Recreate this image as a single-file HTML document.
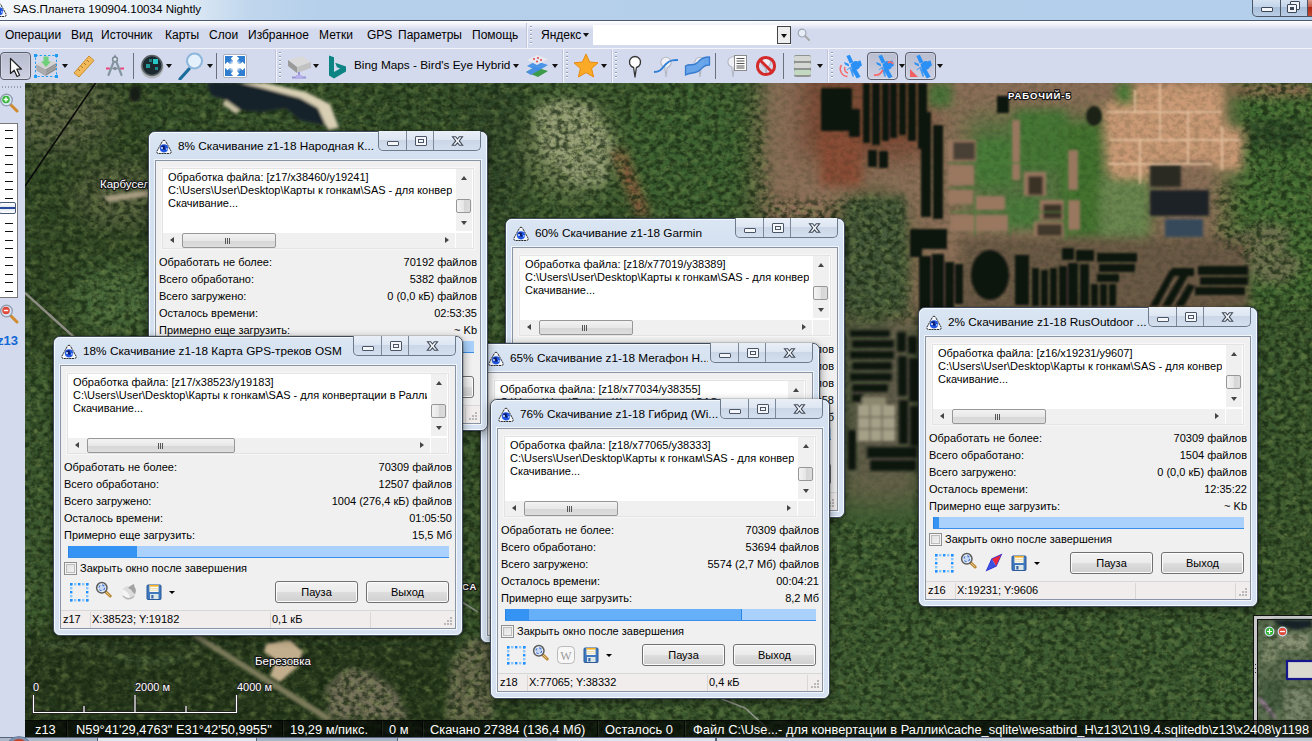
<!DOCTYPE html>
<html lang="ru"><head><meta charset="utf-8"><title>SAS.Планета 190904.10034 Nightly</title>
<style>
*{box-sizing:border-box}
html,body{margin:0;padding:0;width:1312px;height:741px;overflow:hidden;background:#2f4527;font-family:"Liberation Sans",sans-serif;font-size:11px;color:#000}
#map{position:absolute;left:25px;top:83px;width:1287px;height:654px;overflow:hidden;background:#31492a}
#map svg{display:block}
/* main chrome */
#tbar{position:absolute;left:0;top:0;width:1312px;height:21px;background:linear-gradient(90deg,#f3f7fb 0,#edf3f9 120px,#dce8f4 190px,#c0d6ed 250px,#b6d0eb 320px,#b4cfeb 100%);border-bottom:1px solid #4b5a70}
#tbar .tt{position:absolute;left:13px;top:1px;font-size:11.6px;line-height:15px;white-space:nowrap}
#mbar{position:absolute;left:0;top:21px;width:1312px;height:28px;background:linear-gradient(180deg,#fff 0,#eef0f9 4px,#d4daed 9px,#d4daed 100%);border-bottom:1px solid #f3f4fa}
#mbar span{position:absolute;top:7px;font-size:12px;line-height:15px;white-space:nowrap}
#tool{position:absolute;left:0;top:49px;width:1312px;height:34px;background:#d4daed}
#lpan{position:absolute;left:0;top:83px;width:25px;height:654px;background:#d4daed}
#stat{position:absolute;left:25px;top:720px;width:1287px;height:17px;background:rgba(4,8,4,.76);border-top:1px solid rgba(0,0,0,.6);color:#fff;font-size:12.85px;line-height:17px;white-space:nowrap;overflow:hidden}
#stat span{position:absolute;top:0}
#task{position:absolute;left:0;top:737px;width:1312px;height:4px;border-top:1px solid #56637a;background:linear-gradient(90deg,#aebacb 0,#aebacb 97px,#56637a 97px,#56637a 98px,#e4e8ef 98px,#e4e8ef 256px,#56637a 256px,#56637a 257px,#a9b7ca 257px,#a9b7ca 397px,#56637a 397px,#56637a 398px,#cdd4df 398px,#cdd4df 557px,#e0e4ec 557px,#e0e4ec 715px,#56637a 715px,#56637a 717px,#d4dae4 717px,#c4ccd8 100%)}
/* dialogs */
.win{position:absolute;height:300px;border-radius:7px;border:1px solid #3f4c5e;background:linear-gradient(180deg,#dbe6f3 0,#d3e0f0 28px,#d6e2f1 100%);box-shadow:0 0 0 1px rgba(0,0,0,.12),0 3px 10px rgba(0,0,0,.45)}
.wglow{position:absolute;left:0;top:0;right:0;bottom:0;border-radius:6px;border:1px solid rgba(255,255,255,.75)}
.ticon{position:absolute;left:7px;top:7px}
.ttext{position:absolute;left:29px;top:6px;font-size:11.8px;line-height:16px;white-space:nowrap;overflow:hidden}
.caps{position:absolute;right:6px;top:-1px;width:103px;height:20px;border:1px solid #6d7a8c;border-top:none;border-radius:0 0 5px 5px;background:linear-gradient(180deg,#e9eff7 0,#dde6f2 45%,#cbd7e7 50%,#d4dfee 100%);overflow:hidden}
.cb{position:absolute;top:0;height:19px;border-right:1px solid #7b8899}
.cmin{left:0;width:28px}.cmax{left:28px;width:27px}.ccls{left:55px;width:47px;border-right:none}
.cmin i{position:absolute;left:8px;top:10px;width:12px;height:5px;border:1px solid #4a5566;background:#f4f6fa;border-radius:1px}
.cmax i{position:absolute;left:8px;top:5px;width:12px;height:10px;border:1px solid #4a5566;background:#f4f6fa;border-radius:1px;box-shadow:inset 0 0 0 2px #f4f6fa,inset 0 0 0 3px #4a5566}
.ccls svg{position:absolute;left:17px;top:5px}
.client{position:absolute;left:6px;top:28px;right:6px;height:264px;background:#f0f0f0;border:1px solid #8893a3;box-shadow:0 0 0 1px rgba(255,255,255,.7)}
.memo{position:absolute;left:6px;top:7px;right:6px;height:81px;background:#fff;border:1px solid #e3e3e3;box-shadow:0 0 0 1px #f7f7f7}
.mtext{position:absolute;left:5px;top:2px;right:21px;height:42px;line-height:13px;white-space:nowrap;overflow:hidden}
.vsb{position:absolute;right:1px;top:0;width:16px;height:62px;background:#f0f0f0}
.hsb{position:absolute;left:0;bottom:0;right:18px;height:15px;background:#f0f0f0}
.sbc{position:absolute;right:1px;bottom:0;width:16px;height:15px;background:#f0f0f0}
.vth{position:absolute;left:0px;top:30px;width:15px;height:14px;border:1px solid #979797;border-radius:2px;background:linear-gradient(90deg,#f3f3f3,#e6e6e6 50%,#d5d5d5 51%,#dcdcdc)}
.hth{position:absolute;left:19px;top:0px;width:94px;height:15px;border:1px solid #979797;border-radius:2px;background:linear-gradient(180deg,#f3f3f3,#e8e8e8 50%,#d6d6d6 51%,#dedede)}
.hth span{position:absolute;left:42px;top:4px;width:1px;height:6px;background:#555;box-shadow:2px 0 0 #555,4px 0 0 #555}
.au,.ad,.al,.ar{position:absolute;width:0;height:0;border:3.5px solid transparent}
.au{left:4.5px;top:7px;border-top:none;border-bottom:4px solid #444}
.ad{left:4.5px;top:52px;border-bottom:none;border-top:4px solid #444}
.al{left:7px;top:4px;border-left:none;border-right:4px solid #444}
.ar{right:6px;top:4px;border-right:none;border-left:4px solid #444}
.row{position:absolute;left:3px;right:3px;height:14px;line-height:14px;white-space:nowrap}
.row .v{position:absolute;right:0;top:0}
.pbar{position:absolute;left:7px;right:6px;top:180px;height:12px;background:#a9d1fb;border-bottom:1px solid #3a8ee8;overflow:hidden}
.pm{position:absolute;left:0;top:0;height:11px;background:#66b0fa;border-right:1px solid #2a84e6}
.pd{position:absolute;left:0;top:0;height:11px;background:#3593f3;border-left:1px solid #2a84e6}
.chk{position:absolute;left:3px;top:196px;width:13px;height:13px;border:1px solid #8e8f8f;background:linear-gradient(135deg,#dcdcdc,#f6f6f6);box-shadow:inset 0 0 0 1px #f4f4f4,inset 0 0 0 2px #bcbcbc}
.chkl{position:absolute;left:19px;top:195px;line-height:14px;white-space:nowrap}
.ic1{position:absolute;left:8px;top:216px}
.ic2{position:absolute;left:34px;top:215px}
.ic3{position:absolute;left:58px;top:216px}
.ic4{position:absolute;left:85px;top:218px}
.dd{position:absolute;left:108px;top:225px;width:0;height:0;border:3px solid transparent;border-top:3px solid #000;border-bottom:none}
.btn{position:absolute;top:215px;width:83px;height:22px;border:1px solid #707070;border-radius:3px;background:linear-gradient(180deg,#f2f2f2 0,#ebebeb 48%,#dddddd 52%,#cfcfcf 100%);box-shadow:inset 0 0 0 1px #fcfcfc;text-align:center;line-height:20px}
.b1{right:97px}.b2{right:6px}
.sbar{position:absolute;left:0;right:0;bottom:0;height:18px;background:#f1eded;border-top:1px solid #d7d7d7;line-height:17px;white-space:nowrap}
.sbar span{position:absolute;top:0}
.s1{left:2px}.s2{left:31px}.s3{left:211px}
.sbar i{position:absolute;top:1px;width:1px;height:16px;background:#d7d7d7}
.d1{left:29px}.d2{left:209px}.d3{left:309px}
.grip{position:absolute;right:1px;bottom:1px;width:10px;height:10px;background:
 radial-gradient(circle at 1px 1px,#b8b8b8 1px,transparent 1.2px) 6px 6px/3px 3px no-repeat,
 radial-gradient(circle at 1px 1px,#b8b8b8 1px,transparent 1.2px) 3px 6px/3px 3px no-repeat,
 radial-gradient(circle at 1px 1px,#b8b8b8 1px,transparent 1.2px) 6px 3px/3px 3px no-repeat,
 radial-gradient(circle at 1px 1px,#b8b8b8 1px,transparent 1.2px) 0px 6px/3px 3px no-repeat,
 radial-gradient(circle at 1px 1px,#b8b8b8 1px,transparent 1.2px) 6px 0px/3px 3px no-repeat,
 radial-gradient(circle at 1px 1px,#b8b8b8 1px,transparent 1.2px) 3px 3px/3px 3px no-repeat}
#mcaps{position:absolute;left:1252px;top:-1px;width:70px;height:18px;border:1px solid #4a5566;border-top:none;border-radius:0 0 0 5px;overflow:hidden;background:linear-gradient(180deg,#d6e3f2 0,#c4d5ea 45%,#a9bed8 50%,#b9cde6 100%)}
#mcaps div{position:absolute;top:0;height:17px}
.m1{left:0;width:28px;border-right:1px solid #4a5566}
.m1 i{position:absolute;left:8px;top:8px;width:12px;height:5px;border:1px solid #3d4656;background:#f4f6fa;border-radius:1px}
.m2{left:28px;width:27px;border-right:1px solid #4a5566}
.m2 i{position:absolute;left:9px;top:2px;width:10px;height:9px;border:1px solid #3d4656;background:#f0f3f8;border-radius:1px}
.m2 b{position:absolute;left:6px;top:5px;width:10px;height:9px;border:1px solid #3d4656;background:#f0f3f8;border-radius:1px;box-shadow:inset 0 0 0 2px #f0f3f8,inset 0 0 0 4px #3d4656}
.m3{left:55px;width:20px;background:linear-gradient(180deg,#e0a090 0,#c85a48 45%,#b02a18 50%,#c04a30 100%)}
.tsep{position:absolute;top:4px;width:1px;height:26px;background:#6c6f7c}
.tend{position:absolute;top:0;width:2px;height:34px;background:linear-gradient(90deg,#c2c6dc 50%,#f4f5fb 50%)}
.tgrip{position:absolute;top:3px;width:2px;height:28px;background:repeating-linear-gradient(180deg,#9a9fb6 0,#9a9fb6 1px,#fff 1px,#fff 2px,transparent 2px,transparent 4px)}
.tdd{position:absolute;width:0;height:0;border:3.5px solid transparent;border-top:4px solid #111;border-bottom:none}
.tsel{position:absolute;top:3px;height:28px;border:1px solid #5a5d6c;border-radius:4px;background:linear-gradient(180deg,#b9bdd0 0,#c2c6d8 50%,#cdd1e2 100%);box-shadow:inset 0 0 0 1px rgba(255,255,255,.25)}
.tlbl{position:absolute;top:8px;font-size:11.8px;line-height:16px;white-space:nowrap}
#srch{position:absolute;left:593px;top:4px;width:198px;height:20px;background:#fff}
.sdd{position:absolute;right:0;top:1px;width:14px;height:18px;border:1px solid #444;background:#eee}
.lgrip{position:absolute;left:2px;top:3px;width:21px;height:2px;background:repeating-linear-gradient(90deg,#9a9eb4 0,#9a9eb4 1px,transparent 1px,transparent 3px)}
#zsl{position:absolute;left:0;top:40px;width:18px;height:175px;border:1px solid #777;border-left:none;background:#fff repeating-linear-gradient(180deg,transparent 0,transparent 6px,#111 6px,#111 7px,transparent 7px,transparent 8.45px);background-size:8px 100%;background-repeat:no-repeat;background-position:5px 0px}
#zth{position:absolute;left:-1px;top:78px;width:17px;height:12px;border:1px solid #4a5a7a;border-radius:2px;background:linear-gradient(180deg,#fff 0,#e4e8f0 40%,#284a9a 45%,#284a9a 55%,#e4e8f0 60%,#fff 100%)}
#zlv{position:absolute;left:-3px;top:250px;font-size:13px;font-weight:bold;color:#1268d6}
#orb{position:absolute;left:5px;top:-2px;width:28px;height:28px;border-radius:50%;background:radial-gradient(circle at 50% 45%,#e0482a 0,#c8381c 45%,#7f98b8 55%,#5f7ea8 70%,#9fb4cf 100%);border:1px solid #6a7f9c}
#stat i{position:absolute;top:0;width:1px;height:17px;background:rgba(0,0,0,.75);box-shadow:1px 0 0 rgba(255,255,255,.08)}

</style></head><body>
<svg width="0" height="0" style="position:absolute"><defs>
<g id="sasicon"><path d="M8 1.2 Q9 1.200 9.600 2.300 L15 12 Q15.800 14.300 13.500 14.500 L2.500 14.500 Q0.200 14.300 1 12 L6.400 2.300 Q7 1.200 8 1.200 Z" fill="#f4f7fc" stroke="#2a2a2a" stroke-width="1" stroke-dasharray="2.2 0.6"/><circle cx="8" cy="9.300" r="4.100" fill="#1f55e0"/><path d="M5 8 q2 -3 4 -1 q-1 2 1 3 q-3 2 -5 -2z" fill="#0a1a6a"/><circle cx="6" cy="9" r="1.100" fill="#cfe0ff"/><circle cx="10.800" cy="10" r="0.900" fill="#9cc2ff"/></g>
<g id="selrect"><rect x="1" y="1" width="2.400" height="2.400" fill="#1e90ff"/><rect x="1" y="17" width="2.400" height="2.400" fill="#1e90ff"/><rect x="1" y="1" width="2.400" height="2.400" fill="#1e90ff"/><rect x="17" y="1" width="2.400" height="2.400" fill="#1e90ff"/><rect x="5" y="1" width="2.400" height="2.400" fill="#86c8ff"/><rect x="5" y="17" width="2.400" height="2.400" fill="#86c8ff"/><rect x="1" y="5" width="2.400" height="2.400" fill="#86c8ff"/><rect x="17" y="5" width="2.400" height="2.400" fill="#86c8ff"/><rect x="9" y="1" width="2.400" height="2.400" fill="#1e90ff"/><rect x="9" y="17" width="2.400" height="2.400" fill="#1e90ff"/><rect x="1" y="9" width="2.400" height="2.400" fill="#1e90ff"/><rect x="17" y="9" width="2.400" height="2.400" fill="#1e90ff"/><rect x="13" y="1" width="2.400" height="2.400" fill="#86c8ff"/><rect x="13" y="17" width="2.400" height="2.400" fill="#86c8ff"/><rect x="1" y="13" width="2.400" height="2.400" fill="#86c8ff"/><rect x="17" y="13" width="2.400" height="2.400" fill="#86c8ff"/><rect x="17" y="1" width="2.400" height="2.400" fill="#1e90ff"/><rect x="17" y="17" width="2.400" height="2.400" fill="#1e90ff"/><rect x="1" y="17" width="2.400" height="2.400" fill="#1e90ff"/><rect x="17" y="17" width="2.400" height="2.400" fill="#1e90ff"/></g>
<g id="magn"><path d="M10.800 10.800 L15.200 15" stroke="#b8842e" stroke-width="3" stroke-linecap="round"/><path d="M11.300 11.300 L14.800 14.600" stroke="#e8c890" stroke-width="1" stroke-linecap="round"/><circle cx="6.800" cy="6.800" r="5.200" fill="#e4ecf8" stroke="#5c5c5c" stroke-width="1.500"/><circle cx="6.800" cy="6.800" r="2.900" fill="#c8d8f0" stroke="#3a6fd0" stroke-width="1.100" stroke-dasharray="2.6 1.95"/></g>
<g id="ico_w"><rect x="1.5" y="1.5" width="17" height="17" rx="4" fill="#f7f7f7" stroke="#b9b9b9"/><text x="10" y="14.5" font-family="Liberation Serif,serif" font-size="12" text-anchor="middle" fill="#9a9a9a">W</text></g>
<g id="ico_globe"><circle cx="9.500" cy="11" r="7" fill="#dcdcdc"/><path d="M3.500 7.500 Q9 9 11 15 Q8 18.500 4.500 16 Q2 12 3.500 7.500Z" fill="#f4f4f4"/><path d="M9 6 Q12 3 15 2 L15.500 5 Q18 8 16 12 Q13 10 12 7.500 Z" fill="#a2a2a2"/><path d="M4 14 Q9 19 15 14.500" fill="none" stroke="#b4b4b4" stroke-width="1.200"/></g>
<g id="ico_comp"><path d="M3 17 L8 6 L17 2 L12 13 Z" fill="#fff" stroke="#2a2ad0" stroke-width="1.4"/><path d="M17 2 L12 13 L8 6 Z" fill="#e8283c"/><path d="M3 17 L8 6 L12 13 Z" fill="#3a52e0"/></g>
<g id="floppy"><rect x="1" y="1" width="14" height="14.500" rx="1" fill="#3f78be" stroke="#2a5a9a" stroke-width="1"/><rect x="3.500" y="1" width="9" height="7" fill="#fbfbf4"/><rect x="3.500" y="1" width="9" height="1.600" fill="#f5b020"/><path d="M3.500 4.500 h9 M3.500 6.300 h9" stroke="#e8d8a0" stroke-width=".8"/><rect x="4" y="10" width="8.500" height="5" fill="#dce8e8"/><rect x="5.300" y="11" width="2.200" height="3.500" fill="#3a68a8"/></g>
<g id="sat"><g fill="#2b90f5"><path d="M8.400 2 L11.800 0.800 L15.400 8 L11.800 9.600 Z"/><path d="M13.400 15.400 L17.400 13.800 L22.600 22.800 L18.800 24.400 Z"/><circle cx="17.800" cy="11.400" r="4.300"/><path d="M12.500 10 L14.500 9 L16 15 L14 16 Z"/><path d="M20 7 L22.500 6.500 L24 11.500 L21.500 13 Z"/><path d="M6 8 L10.600 9.800 L11.200 12.600 L7 10.400 Z"/><path d="M11.500 13 L14.500 16 L16 22.500 L14.500 22.800 L12.500 17 Z" opacity=".85"/><path d="M8.500 15.500 L13 12.500 L13.600 13.500 L9 16.300Z" opacity=".7"/></g></g>
</defs></svg>

<div id="map"><svg width="1287" height="655" viewBox="25 83 1287 655">
<defs>
<filter id="b12" x="-20%" y="-20%" width="140%" height="140%"><feGaussianBlur stdDeviation="12"/></filter>
<filter id="b6" x="-20%" y="-20%" width="140%" height="140%"><feGaussianBlur stdDeviation="5"/></filter>
<filter id="b3" x="-20%" y="-20%" width="140%" height="140%"><feGaussianBlur stdDeviation="3"/></filter>
<filter id="b2" x="-10%" y="-10%" width="120%" height="120%"><feGaussianBlur stdDeviation="1.6"/></filter>
<filter id="b1" x="-10%" y="-10%" width="120%" height="120%"><feGaussianBlur stdDeviation="0.8"/></filter>
<filter id="nz" color-interpolation-filters="sRGB" x="0" y="0" width="100%" height="100%"><feTurbulence type="fractalNoise" baseFrequency="0.16 0.2" numOctaves="3" seed="7" result="n"/><feColorMatrix in="n" type="matrix" values="0 0 0 0 0.08  0 0 0 0 0.14  0 0 0 0 0.06  2.2 2.2 0 0 -1.85"/></filter>
<filter id="nz2" color-interpolation-filters="sRGB" x="0" y="0" width="100%" height="100%"><feTurbulence type="fractalNoise" baseFrequency="0.12 0.15" numOctaves="3" seed="23" result="n"/><feColorMatrix in="n" type="matrix" values="0 0 0 0 0.49  0 0 0 0 0.57  0 0 0 0 0.31  0 1.8 1.2 0 -1.30"/></filter>
<mask id="mk" maskUnits="userSpaceOnUse" x="25" y="83" width="1287" height="655"><rect x="25" y="83" width="1287" height="655" fill="#fff"/><g filter="url(#b6)"><path d="M760 70 L1240 70 L1245 180 L1215 185 L1215 240 L1250 262 L1250 312 L912 318 L905 200 L860 195 L830 200 L770 200 Z" fill="#3a3a3a"/><rect x="843" y="322" width="78" height="200" fill="#333"/></g></mask>
</defs>
<rect x="25" y="83" width="1287" height="655" fill="#3d5a30"/>
<!-- broad soft regions -->
<g filter="url(#b12)">
<rect x="0" y="60" width="160" height="300" fill="#304828"/>
<ellipse cx="60" cy="110" rx="50" ry="40" fill="#5f6646"/>
<ellipse cx="120" cy="195" rx="45" ry="28" fill="#58603f"/>
<ellipse cx="120" cy="300" rx="50" ry="35" fill="#4a6a3a"/>
<rect x="140" y="60" width="380" height="80" fill="#34502b"/>
<ellipse cx="570" cy="148" rx="42" ry="46" fill="#7a865c"/><rect x="470" y="83" width="55" height="140" fill="#33482b"/>
<ellipse cx="690" cy="150" rx="70" ry="70" fill="#3d6232"/>
<rect x="760" y="60" width="500" height="260" fill="#8c6e58"/>
<rect x="800" y="60" width="130" height="100" fill="#7a4a36"/>
<ellipse cx="870" cy="260" rx="40" ry="70" fill="#40582f"/>
<rect x="1225" y="70" width="110" height="270" fill="#426c32"/>
<rect x="1060" y="115" width="90" height="125" fill="#4a7038"/>
<rect x="965" y="115" width="100" height="110" fill="#55713f"/>
<rect x="843" y="322" width="78" height="150" fill="#5e5a48"/>
<rect x="840" y="470" width="82" height="60" fill="#66624a"/>
<rect x="820" y="500" width="500" height="260" fill="#3c5c30"/>
<rect x="1255" y="300" width="80" height="330" fill="#3a582f"/>
<rect x="0" y="630" width="520" height="120" fill="#25391f"/>
<rect x="460" y="430" width="40" height="300" fill="#3a582f"/>
</g>
<!-- medium detail -->
<g filter="url(#b6)">
<path d="M1103 108 L1134 83 L1224 83 L1224 126 L1243 128 L1243 171 L1215 170 L1212 161 L1153 164 L1150 185 L1128 185 L1107 173 Z" fill="#cc9a76"/>
<rect x="1228" y="83" width="84" height="14" fill="#8a6a50"/>
<rect x="1246" y="120" width="60" height="28" fill="#2a4a27"/>
<path d="M1221 240 L1260 222 L1292 228 L1285 250 L1305 262 L1290 282 L1259 284 L1250 266 L1225 262 Z" fill="#6d7050"/>
<rect x="975" y="139" width="38" height="46" fill="#477a38"/>
<rect x="1015" y="110" width="52" height="60" fill="#457635"/>
<rect x="1006" y="198" width="32" height="30" fill="#4a7a3a"/>
<rect x="1062" y="125" width="38" height="110" fill="#42722f"/>
<rect x="1100" y="178" width="48" height="58" fill="#6a8650"/>
<rect x="928" y="83" width="24" height="24" fill="#4a7238"/>
<rect x="1116" y="83" width="18" height="22" fill="#4a7a38"/>
<rect x="820" y="132" width="42" height="54" fill="#8a4c36"/>
<path d="M845 201 L905 195 L908 313 L840 313 Z" fill="#475a3a"/>
<rect x="960" y="238" width="290" height="72" fill="#6a5844"/>
<path d="M534 108 L560 100 L592 104 L612 140 L604 186 L575 182 L548 160 L536 132 Z" fill="#98a078"/>
<path d="M610 150 L625 150 L650 215 L638 218 Z" fill="#8a5a3c"/>
</g>
<g filter="url(#b3)">
<path d="M325 690 L345 668 L372 672 L395 690 L409 720 L330 720 Z" fill="#75705a"/>
<path d="M446 720 L452 660 L470 638 L493 640 L493 720 Z" fill="#6a6a50"/>
<path d="M40 646 Q90 640 120 656 T200 650" stroke="#4a5f3a" stroke-width="5" fill="none"/>
</g>
<!-- texture -->
<g mask="url(#mk)"><rect x="25" y="83" width="1287" height="655" filter="url(#nz2)" opacity=".5"/>
<rect x="25" y="83" width="1287" height="655" filter="url(#nz)" opacity=".7"/></g>
<g filter="url(#b2)">
<path d="M191 636 L198 634 L333 718 L326 721 Z" fill="#7d7c5c"/>
<path d="M266 644 L290 640 L303 652 L296 668 L280 682 L270 676 L276 660 L264 652 Z" fill="#c2ae8c"/>
</g>
<!-- sharp dark fields -->
<g filter="url(#b1)" fill="#0d120c">
<rect x="821" y="88" width="31" height="43"/><rect x="849" y="109" width="11" height="28"/>
<rect x="863" y="83" width="7" height="60"/><rect x="872" y="83" width="8" height="62"/><rect x="882" y="83" width="7" height="58"/><rect x="890" y="83" width="7" height="55"/>
<rect x="899" y="83" width="7" height="52"/><rect x="908" y="83" width="8" height="58"/><rect x="918" y="83" width="9" height="66"/>
<rect x="868" y="150" width="9" height="17"/><rect x="879" y="151" width="9" height="17"/>
<rect x="921" y="112" width="10" height="105"/><rect x="933" y="125" width="10" height="94"/>
<rect x="910" y="229" width="12" height="28"/><rect x="922" y="229" width="25" height="20"/>
<rect x="919" y="256" width="12" height="57"/><rect x="932" y="254" width="12" height="59"/><rect x="945" y="262" width="9" height="51"/><rect x="955" y="264" width="8" height="40"/>
<ellipse cx="990" cy="275" rx="19" ry="25"/>
<rect x="1015" y="255" width="14" height="50"/><rect x="1032" y="268" width="7" height="38"/><rect x="1041" y="270" width="7" height="36"/><rect x="1050" y="268" width="7" height="38"/><rect x="1059" y="266" width="8" height="40"/>
<rect x="1062" y="248" width="12" height="12"/><rect x="1076" y="250" width="18" height="11"/><rect x="1068" y="263" width="10" height="43"/><rect x="1080" y="264" width="9" height="42"/>
<rect x="1097" y="253" width="40" height="9"/><rect x="1099" y="264" width="36" height="8"/><rect x="1097" y="274" width="22" height="8"/>
<rect x="1091" y="284" width="7" height="22"/><rect x="1100" y="284" width="7" height="22"/><rect x="1109" y="284" width="7" height="22"/>
<path d="M1150 306 L1170 270 L1177 270 L1158 306 Z M1162 306 L1182 272 L1189 274 L1171 306 Z M1175 306 L1188 284 L1195 286 L1184 306Z"/>
<rect x="1172" y="268" width="22" height="8"/>
<rect x="1198" y="266" width="50" height="9"/><rect x="1200" y="277" width="48" height="8"/><rect x="1195" y="287" width="50" height="8"/>
<rect x="997" y="96" width="12" height="17"/>
<ellipse cx="1094" cy="116" rx="8" ry="10" fill="#1c2416"/>
</g>
<g filter="url(#b2)">
<path d="M206 83 L262 83 L300 96 L318 106 L326 126 L300 120 L285 108 L262 112 L240 110 L226 100 L212 96 Z" fill="#16242a"/>
<path d="M240 83 L266 83 L306 92 L330 104 L339 128 L328 130 L318 108 L300 98 L262 88 Z" fill="#d8cfb4"/>
<path d="M226 100 L240 110 L236 114 L222 104Z" fill="#c8c0a4"/>
<ellipse cx="135" cy="94" rx="6" ry="8" fill="#141c12"/>
<path d="M104 196 L150 190 L152 196 L108 202 Z" fill="#a89c82"/>
<rect x="1150" y="165" width="31" height="22" fill="#2b2b22"/>
<rect x="1150" y="190" width="59" height="26" fill="#1c2226"/>
<rect x="1165" y="219" width="38" height="18" fill="#34485a"/>
<g fill="#9a7860"><rect x="948" y="140" width="28" height="22"/><rect x="948" y="165" width="26" height="20"/><rect x="948" y="190" width="25" height="14"/><rect x="975" y="196" width="30" height="14"/><rect x="950" y="215" width="58" height="16"/><rect x="1024" y="172" width="22" height="24"/><rect x="1040" y="200" width="24" height="20"/><rect x="1034" y="222" width="30" height="15"/><rect x="1012" y="120" width="8" height="60"/><rect x="1068" y="150" width="10" height="40"/><rect x="1068" y="200" width="12" height="30"/></g>
<rect x="953" y="142" width="22" height="18" fill="#4a4034"/><rect x="1028" y="176" width="15" height="19" fill="#3a3228"/><rect x="1043" y="204" width="19" height="15" fill="#3a3228"/><rect x="1037" y="224" width="25" height="12" fill="#3f382c"/>
<g fill="#10140e"><rect x="850" y="330" width="40" height="7"/><rect x="852" y="340" width="42" height="8"/><rect x="850" y="351" width="44" height="8"/><rect x="852" y="362" width="40" height="8"/><rect x="850" y="373" width="42" height="8"/><rect x="852" y="384" width="36" height="8"/><rect x="852" y="394" width="12" height="8"/>
<rect x="897" y="332" width="9" height="20"/><rect x="908" y="336" width="9" height="18"/><rect x="898" y="356" width="9" height="40"/><rect x="909" y="358" width="10" height="44"/><rect x="899" y="400" width="9" height="44"/><rect x="910" y="406" width="9" height="40"/>
<rect x="867" y="447" width="50" height="11"/><rect x="870" y="460" width="46" height="11"/><rect x="848" y="430" width="8" height="40"/></g>
<rect x="858" y="405" width="37" height="36" fill="#a6a088"/><rect x="862" y="397" width="24" height="8" fill="#8c8870"/><path d="M858 417 h37 M858 429 h37 M870 405 v36 M882 405 v36" stroke="#6a6654" stroke-width="1.5"/>
</g>
<g filter="url(#b1)" stroke="#e6c4a2" stroke-width="2" fill="none" opacity=".85">
<path d="M1107 112 H1222 M1110 140 H1240 M1108 164 H1212 M1160 84 V140 M1135 90 V112 M1188 112 V164 M1222 126 V170 M1140 140 V184"/>
</g>
<g filter="url(#b1)" stroke="#4c7a3a" stroke-width="1.5" fill="none" opacity=".8"><path d="M948 163 H1066 M948 188 H1010 M1010 120 V236 M975 196 V236 M950 212 H1066 M1066 120 V240"/></g>
<!-- lines -->
<path d="M95.5 83 L25 186" stroke="#0a0a0a" stroke-width="1.6" fill="none"/>
<path d="M25 293 L75 338" stroke="#8d8d84" stroke-width="2.4" fill="none"/>
<path d="M462 602 L478 612" stroke="#9a9a94" stroke-width="1.5" fill="none" opacity=".8"/>
<path d="M722 699 L745 708 L778 738" stroke="#a4a4a0" stroke-width="1.6" fill="none" opacity=".8"/>
<g font-family="Liberation Sans, sans-serif" fill="#fff" stroke="#1a1a1a" stroke-width="2.4" paint-order="stroke" stroke-linejoin="round">
<text x="100" y="187.500" font-size="11.5">Карбусель</text>
<text x="255" y="665" font-size="11.500">Березовка</text>
<text x="1008" y="98.500" font-size="9.5" font-weight="bold" letter-spacing="0.9">РАБОЧИЙ-5</text>
<text x="462" y="589.500" font-size="9.5" font-weight="bold" letter-spacing="0.9">СА</text>
</g>
<g font-family="Liberation Sans, sans-serif" font-size="11" fill="#fff" stroke="#222" stroke-width="1.8" paint-order="stroke">
<text x="33" y="691">0</text><text x="135" y="691">2000 м</text><text x="237" y="691">4000 м</text></g>
<path d="M33.500 695 V712.500 H236.500 V695 M135 695 V712 M84 706 V712 M186 706 V712" fill="none" stroke="#222" stroke-width="3"/>
<path d="M33.500 695 V712.500 H236.500 V695 M135 695 V712 M84 706 V712 M186 706 V712" fill="none" stroke="#fff" stroke-width="1.2"/>
<g>
<rect x="1253.500" y="615.500" width="70" height="120" fill="#c9c9c9" stroke="#111" stroke-width="1"/>
<rect x="1257.500" y="619.500" width="70" height="120" fill="#5d6f50" stroke="#111" stroke-width="1"/>
<g filter="url(#b2)"><path d="M1272 620 H1312 V627 L1296 630 L1280 626 Z" fill="#14202c"/><rect x="1262" y="640" width="14" height="24" fill="#7f8a6a"/><rect x="1278" y="634" width="30" height="16" fill="#8a9274"/><rect x="1262" y="680" width="20" height="30" fill="#4a5f42"/><rect x="1285" y="690" width="27" height="30" fill="#7a866a"/><path d="M1259 698 L1275 718" stroke="#a080a0" stroke-width="3"/></g>
<rect x="1258" y="620" width="54" height="100" filter="url(#nz)" opacity=".4"/>
<rect x="1287" y="661" width="30" height="18" fill="#d9d9cf" stroke="#15158c" stroke-width="2.2"/>
<circle cx="1269.500" cy="631.500" r="4.300" fill="#35b535" stroke="#cfe4f4" stroke-width="1.2"/><path d="M1267 631.500 h5 M1269.500 629 v5" stroke="#fff" stroke-width="1.2"/>
<circle cx="1282.500" cy="631.500" r="4.300" fill="#e04a3a" stroke="#cfe4f4" stroke-width="1.2"/><path d="M1280 631.500 h5" stroke="#fff" stroke-width="1.300"/>
<path d="M1255.500 664 v1 m0 3 v1 m0 3 v1" stroke="#333" stroke-width="1"/>
</g>
</svg>
</div>
<div id="tbar"><svg style="position:absolute;left:-9px;top:2px" width="16" height="16" viewBox="0 0 16 16"><use href="#sasicon"/></svg><div class="tt">SAS.Планета 190904.10034 Nightly</div>
<div id="mcaps"><div class="m1"><i></i></div><div class="m2"><i></i><b></b></div><div class="m3"></div></div></div>
<div id="mbar"><span style="left:5px">Операции</span><span style="left:71px">Вид</span><span style="left:101px">Источник</span><span style="left:165px">Карты</span><span style="left:209px">Слои</span><span style="left:248px">Избранное</span><span style="left:319px">Метки</span><span style="left:367px">GPS</span><span style="left:398px">Параметры</span><span style="left:472px">Помощь</span><i class="tend" style="left:526px;top:2px;height:25px"></i><i class="tgrip" style="left:530px;top:5px;height:20px"></i><span style="left:541px">Яндекс</span><b class="tdd" style="left:583px;top:12px"></b>
<div id="srch"><div class="sdd"><b class="tdd" style="left:3px;top:7px"></b></div></div>
<svg style="position:absolute;left:797px;top:7px" width="14" height="14" viewBox="0 0 18 18"><circle cx="6.5" cy="6.5" r="5" fill="#e6edf6" stroke="#9aa4b0" stroke-width="1.4"/><path d="M10.4 10.4 L15.5 15.5" stroke="#a9a9a9" stroke-width="2.6" stroke-linecap="round"/></svg>
</div>
<div id="tool">
<div class="tsel" style="left:0;width:31px"></div>
<svg style="position:absolute;left:9px;top:8px" width="14" height="21" viewBox="0 0 14 21"><path d="M1.5 1.5 L1.5 16.5 L5.2 13.2 L8 19.5 L10.6 18.3 L7.8 12.2 L12.5 12.2 Z" fill="#fff" stroke="#222" stroke-width="1.2" stroke-linejoin="round"/></svg>
<svg style="position:absolute;left:33px;top:4px" width="26" height="26" viewBox="0 0 26 26"><path d="M3 11.500 L13 6.500 L23.500 10 L12.500 16.500 Z" fill="#d2d2d2"/><path d="M3 11.500 L12.500 16.500 L12.500 23 L3.500 17.500 Z" fill="#a4a4a4"/><path d="M12.500 16.500 L23.500 10 L23.500 16.500 L12.500 23 Z" fill="#8e8e8e"/><path d="M3 13.500 L12.500 18.500 L23.500 12" fill="none" stroke="#c0c0c0" stroke-width=".6"/><path d="M3.200 15.500 L12.500 20.600 L23.500 14" fill="none" stroke="#c0c0c0" stroke-width=".6"/><path d="M10.500 3.500 H15.500 V8.500 H18 L13 14 L8 8.500 H10.500 Z" fill="#5fcf6a" opacity=".85"/><rect x="2.500" y="2.500" width="21" height="21" fill="none" stroke="#1e9bf5" stroke-width="1" stroke-dasharray="2.200 2"/><g fill="#1e9bf5"><rect x="1" y="1" width="3" height="3"/><rect x="22" y="1" width="3" height="3"/><rect x="1" y="22" width="3" height="3"/><rect x="22" y="22" width="3" height="3"/></g></svg>
<b class="tdd" style="left:62px;top:15px"></b>
<svg style="position:absolute;left:72px;top:5px" width="24" height="24" viewBox="0 0 24 24"><path d="M2 19 L17 2 L22 6.5 L7 23 Z" fill="#f0b95a" stroke="#c98d2e" stroke-width="1"/><path d="M6 15 l2 2 M9 12 l2 2 M12 9 l2 2 M15 6 l2 2" stroke="#a8742a" stroke-width="1"/></svg>
<svg style="position:absolute;left:104px;top:4px" width="22" height="24" viewBox="0 0 22 24"><path d="M11 1 L12.200 4 H9.800 Z" fill="#7c8a94"/><circle cx="11" cy="6.500" r="2.400" fill="#dfe5ec" stroke="#7c8a94" stroke-width="1.500"/><path d="M9.800 8.500 L4.500 22 M12.200 8.500 L17.500 22" stroke="#8595a0" stroke-width="2.200" stroke-linecap="round"/><path d="M5 15.500 H17" stroke="#8a98a2" stroke-width="1.400"/><path d="M2 15.500 H5.500 M16.500 15.500 H20" stroke="#f0407c" stroke-width="1.800"/><circle cx="11" cy="15.500" r="1.700" fill="#7c8a94"/></svg>
<i class="tsep" style="left:133px"></i>
<svg style="position:absolute;left:140px;top:4px" width="24" height="26" viewBox="0 0 24 26"><ellipse cx="12" cy="14" rx="11.5" ry="11.5" fill="#b5b8bd"/><circle cx="12" cy="12.5" r="10" fill="#1c2a30" stroke="#5c6469" stroke-width="1.5"/><g fill="#27c8c8"><rect x="13" y="6" width="5" height="5"/><rect x="6" y="11" width="4" height="4" opacity=".7"/><rect x="15" y="14" width="3" height="3" opacity=".6"/><rect x="9" y="6" width="3" height="3" opacity=".5"/></g></svg>
<b class="tdd" style="left:166px;top:15px"></b>
<svg style="position:absolute;left:177px;top:3px" width="28" height="28" viewBox="0 0 28 28"><path d="M12 17 L3 27" stroke="#1a6d9c" stroke-width="3.2" stroke-linecap="round"/><circle cx="17.5" cy="9" r="7.5" fill="#e4f0fb" stroke="#8cb6dc" stroke-width="2"/></svg>
<b class="tdd" style="left:207px;top:15px"></b>
<i class="tsep" style="left:216px"></i>
<svg style="position:absolute;left:223px;top:5px" width="24" height="24" viewBox="0 0 24 24"><defs><radialGradient id="fsg" cx="50%" cy="50%" r="50%"><stop offset="0" stop-color="#fff"/><stop offset=".45" stop-color="#fff" stop-opacity=".95"/><stop offset="1" stop-color="#fff" stop-opacity="0"/></radialGradient><path id="fsa" d="M10.200 2 H13.800 L16.300 4.500 L14.300 6.600 L14 6.600 V12 H10 V6.600 L9.700 6.600 L7.700 4.500 Z"/></defs><rect x="0.5" y="0.5" width="23" height="23" rx="1.500" fill="#fff" stroke="#aeb2be"/><rect x="2" y="2" width="20" height="20" fill="#2e7dd1"/><circle cx="12" cy="12" r="7.500" fill="url(#fsg)"/><g fill="#fff"><use href="#fsa"/><use href="#fsa" transform="rotate(90 12 12)"/><use href="#fsa" transform="rotate(180 12 12)"/><use href="#fsa" transform="rotate(270 12 12)"/></g></svg>
<i class="tend" style="left:275px"></i><i class="tgrip" style="left:279px"></i>
<svg style="position:absolute;left:286px;top:5px" width="26" height="26" viewBox="0 0 26 26"><path d="M2 6 L16 2 L25 8 L11 13 Z" fill="#d9d9d9"/><path d="M2 6 L11 13 L11 19 L2 12 Z" fill="#9a9a9a"/><path d="M11 13 L25 8 L25 14 L11 19 Z" fill="#c2c2c2"/><path d="M13 18 V22 M6 23.5 H20" stroke="#9a92d8" stroke-width="2"/><rect x="10" y="21" width="6" height="4" fill="#b6b0e8"/></svg>
<b class="tdd" style="left:313px;top:15px"></b>
<svg style="position:absolute;left:328px;top:6px" width="19" height="24" viewBox="0 0 19 24"><path d="M1 0.5 L6 2.2 V17 L12.2 13.6 L9 12.2 L7.2 7.8 L18 11.5 V16.5 L6 23.5 L1 20.5 Z" fill="#0c8484"/></svg>
<span class="tlbl" style="left:354px">Bing Maps - Bird's Eye Hybrid</span>
<b class="tdd" style="left:513px;top:15px"></b>
<svg style="position:absolute;left:525px;top:5px" width="24" height="24" viewBox="0 0 24 24"><path d="M1 18 L10 13 L23 17 L13 23 Z" fill="#3c9a48"/><path d="M1 18 L10 13 L16 15 L6 21Z" fill="#4a8fe0"/><path d="M2 12 L11 7 L23 11 L13 17 Z" fill="#3f8ee6" opacity=".92"/><path d="M2 6 L12 1 L23 5 L12 11 Z" fill="#e9e9ee" opacity=".95"/><g fill="#e04848"><circle cx="9" cy="5" r="1"/><circle cx="13" cy="4" r="1"/><circle cx="16" cy="6" r="1"/><circle cx="12" cy="7.5" r="1"/></g></svg>
<b class="tdd" style="left:552px;top:15px"></b>
<i class="tend" style="left:562px"></i><i class="tgrip" style="left:566px"></i>
<svg style="position:absolute;left:573px;top:4px" width="26" height="25" viewBox="0 0 26 25"><path d="M13 1 L16.6 9 L25 9.8 L18.6 15.6 L20.6 24 L13 19.6 L5.4 24 L7.4 15.6 L1 9.8 L9.4 9 Z" fill="#fbaa28" stroke="#e88a10" stroke-width="1" stroke-linejoin="round"/></svg>
<b class="tdd" style="left:601px;top:15px"></b>
<i class="tend" style="left:611px"></i><i class="tgrip" style="left:615px"></i>
<svg style="position:absolute;left:628px;top:6px" width="14" height="24" viewBox="0 0 14 24"><path d="M7 22 L5.6 12.5 A5.6 5.6 0 1 1 8.4 12.5 Z" fill="#fff" stroke="#333" stroke-width="1.3" stroke-linejoin="round"/></svg>
<svg style="position:absolute;left:653px;top:6px" width="26" height="24" viewBox="0 0 26 24"><path d="M13 22 L11.8 12.5 A5.2 5.2 0 1 1 14.2 12.5 Z" fill="#eef0f6" stroke="#b4b8c4" stroke-width="1.2"/><path d="M1 17 C8 17 9 13 13 9 C17 5 20 5 25 5" fill="none" stroke="#2f7fd6" stroke-width="1.8"/></svg>
<svg style="position:absolute;left:684px;top:6px" width="27" height="24" viewBox="0 0 27 24"><path d="M16 22 L14.8 12.5 A5.2 5.2 0 1 1 17.2 12.5 Z" fill="#eef0f6" stroke="#b4b8c4" stroke-width="1.2"/><path d="M1.5 11 C6 8 10 12 14 7 C17 3 21 2 25.5 2 V10 C21 10 19 12 16 15 C12 19 7 17 1.5 20 Z" fill="#5ea0ea" stroke="#2a74cc" stroke-width="1.3" opacity=".92"/></svg>
<i class="tsep" style="left:715px"></i>
<svg style="position:absolute;left:726px;top:5px" width="22" height="25" viewBox="0 0 22 25"><path d="M7 23 L5.8 13 A5.2 5.2 0 1 1 8.2 13 Z" fill="#eef0f6" stroke="#b4b8c4" stroke-width="1.2"/><rect x="8.5" y="1.5" width="12" height="15" fill="#fff" stroke="#8a8a8a"/><path d="M10.5 4.5 H18.5 M10.5 7 H18.5 M10.5 9.5 H18.5 M10.5 12 H18.5 M10.5 14 H18.5" stroke="#555" stroke-width="1"/></svg>
<svg style="position:absolute;left:755px;top:6px" width="22" height="22" viewBox="0 0 22 22"><path d="M11 20 L10 12 A4.5 4.5 0 1 1 12 12 Z" fill="#eef0f6" stroke="#b4b8c4" stroke-width="1.1"/><circle cx="11" cy="11" r="8.6" fill="none" stroke="#d42a2a" stroke-width="3"/><path d="M5 5 L17 17" stroke="#d42a2a" stroke-width="3"/></svg>
<i class="tsep" style="left:783px"></i>
<svg style="position:absolute;left:793px;top:5px" width="19" height="24" viewBox="0 0 19 24"><rect x="1" y="1" width="17" height="22" rx="2" fill="#8f9490"/><rect x="1" y="2" width="17" height="5" rx="1.5" fill="#d4d7d4"/><rect x="1" y="9" width="17" height="5" rx="1.5" fill="#d4d7d4"/><rect x="1" y="16" width="17" height="5" rx="1.5" fill="#c2d8c0"/></svg>
<b class="tdd" style="left:817px;top:15px"></b>
<i class="tend" style="left:827px"></i><i class="tgrip" style="left:831px"></i>
<svg style="position:absolute;left:838px;top:5px" width="25" height="25" viewBox="0 0 25 25"><use href="#sat"/><path d="M3.500 11 a7.500 7.500 0 0 0 6 11.500 M7 13 a4.200 4.200 0 0 0 3 6" fill="none" stroke="#f56a6a" stroke-width="1.500"/></svg>
<div class="tsel" style="left:867px;width:31px"></div>
<svg style="position:absolute;left:870px;top:5px" width="25" height="25" viewBox="0 0 25 25"><use href="#sat"/><path d="M4 21 C9 22 11 19 13 16 M18 9 C20 7 22 8 23 10" fill="none" stroke="#f56a6a" stroke-width="1.800"/></svg>
<b class="tdd" style="left:899px;top:15px"></b>
<div class="tsel" style="left:905px;width:31px"></div>
<svg style="position:absolute;left:908px;top:5px" width="25" height="25" viewBox="0 0 25 25"><use href="#sat"/><path d="M2 23 V15 L10 23 Z" fill="#f06060"/></svg>
<b class="tdd" style="left:937px;top:15px"></b>
</div>
<div id="lpan">
<i class="lgrip"></i>
<svg style="position:absolute;left:0;top:10px" width="20" height="20" viewBox="0 0 20 20"><path d="M10 11 L17 18" stroke="#d08a30" stroke-width="3" stroke-linecap="round"/><circle cx="6.5" cy="7" r="5.8" fill="#d8e6f6" stroke="#8c98a8" stroke-width="1.3"/><circle cx="6" cy="6.5" r="3.8" fill="#38b838"/><path d="M3.8 6.5 H8.2 M6 4.3 V8.7" stroke="#fff" stroke-width="1.4"/></svg>
<div id="zsl"><div id="zth"></div></div>
<svg style="position:absolute;left:0;top:221px" width="20" height="20" viewBox="0 0 20 20"><path d="M10 11 L17 18" stroke="#d08a30" stroke-width="3" stroke-linecap="round"/><circle cx="6.5" cy="7" r="5.8" fill="#d8e6f6" stroke="#8c98a8" stroke-width="1.3"/><circle cx="6" cy="6.5" r="3.8" fill="#e04a3a"/><path d="M3.8 6.5 H8.2" stroke="#fff" stroke-width="1.4"/></svg>
<div id="zlv">z13</div>
</div>
<div id="stat"><i style="left:41px"></i><i style="left:257px"></i><i style="left:356px"></i><i style="left:397px"></i><i style="left:572px"></i><i style="left:659px"></i><span style="left:10px">z13</span><span style="left:51px">N59°41'29,4763" E31°42'50,9955"</span><span style="left:265px">19,29 м/пикс.</span><span style="left:364px">0 м</span><span style="left:405px">Скачано 27384 (136,4 Мб)</span><span style="left:580px">Осталось 0</span><span style="left:668px">Файл C:\Use...- для конвертации в Раллик\cache_sqlite\wesatbird_H\z13\2\1\9.4.sqlitedb\z13\x2408\y1198</span></div>
<div id="task"><div id="orb"></div></div>

<div class="win" style="left:505px;top:218px;width:340px;z-index:1"><div class="wglow"></div><svg class="ticon" width="16" height="16" viewBox="0 0 16 16"><use href="#sasicon"/></svg><div class="ttext">60% Скачивание z1-18 Garmin</div><div class="caps"><div class="cb cmin"><i></i></div><div class="cb cmax"><i></i></div><div class="cb ccls"><svg width="13" height="10" viewBox="0 0 14 11"><path d="M1.5 0.8 L5 0.8 L7 3.3 L9 0.8 L12.500 0.8 L8.900 5.4 L12.700 10.2 L9.200 10.2 L7 7.500 L4.800 10.2 L1.3 10.2 L5.100 5.4 Z" fill="#f4f6fa" stroke="#3f4958" stroke-width="1.200"/></svg></div></div><div class="client"><div class="memo"><div class="mtext">Обработка файла: [z18/x77019/y38389]<br>C:\Users\User\Desktop\Карты к гонкам\SAS - для конвертации в Раллик<br>Скачивание...</div><div class="vsb"><b class="au"></b><div class="vth"></div><b class="ad"></b></div><div class="hsb"><b class="al"></b><div class="hth"><span></span></div><b class="ar"></b></div><div class="sbc"></div></div><div class="row" style="top:94px"><span class="l">Обработать не более:</span><span class="v">70309 файлов</span></div><div class="row" style="top:111px"><span class="l">Всего обработано:</span><span class="v">42000 файлов</span></div><div class="row" style="top:128px"><span class="l">Всего загружено:</span><span class="v">3000 (1,2 Мб) файлов</span></div><div class="row" style="top:145px"><span class="l">Осталось времени:</span><span class="v">00:08:58</span></div><div class="row" style="top:162px"><span class="l">Примерно еще загрузить:</span><span class="v">9,5 Мб</span></div><div class="pbar"><div class="pm" style="width:180px"></div><div class="pd" style="width:20px"></div></div><div class="chk"></div><div class="chkl">Закрыть окно после завершения</div><svg class="ic1" width="20" height="20" viewBox="0 0 20 20"><use href="#selrect"/></svg><svg class="ic2" width="18" height="18" viewBox="0 0 18 18"><use href="#magn"/></svg><svg class="ic3" width="20" height="20" viewBox="0 0 20 20"><use href="#ico_w"/></svg><svg class="ic4" width="16" height="16" viewBox="0 0 16 16"><use href="#floppy"/></svg><div class="dd"></div><div class="btn b1">Пауза</div><div class="btn b2">Выход</div><div class="sbar"><span class="s1">z18</span><span class="s2">X:77019; Y:38388</span><span class="s3">0,3 кБ</span><i class="d1"></i><i class="d2"></i><i class="d3"></i><div class="grip"></div></div></div></div>
<div class="win" style="left:480px;top:343px;width:340px;z-index:2"><div class="wglow"></div><svg class="ticon" width="16" height="16" viewBox="0 0 16 16"><use href="#sasicon"/></svg><div class="ttext" style="width:198px">65% Скачивание z1-18 Мегафон Н...</div><div class="caps"><div class="cb cmin"><i></i></div><div class="cb cmax"><i></i></div><div class="cb ccls"><svg width="13" height="10" viewBox="0 0 14 11"><path d="M1.5 0.8 L5 0.8 L7 3.3 L9 0.8 L12.500 0.8 L8.900 5.4 L12.700 10.2 L9.200 10.2 L7 7.500 L4.800 10.2 L1.3 10.2 L5.100 5.4 Z" fill="#f4f6fa" stroke="#3f4958" stroke-width="1.200"/></svg></div></div><div class="client"><div class="memo"><div class="mtext">Обработка файла: [z18/x77034/y38355]<br>C:\Users\User\Desktop\Карты к гонкам\SAS - для конвертации в Раллик<br>Скачивание...</div><div class="vsb"><b class="au"></b><div class="vth"></div><b class="ad"></b></div><div class="hsb"><b class="al"></b><div class="hth"><span></span></div><b class="ar"></b></div><div class="sbc"></div></div><div class="row" style="top:94px"><span class="l">Обработать не более:</span><span class="v">70309 файлов</span></div><div class="row" style="top:111px"><span class="l">Всего обработано:</span><span class="v">45800 файлов</span></div><div class="row" style="top:128px"><span class="l">Всего загружено:</span><span class="v">4100 (2,0 Мб) файлов</span></div><div class="row" style="top:145px"><span class="l">Осталось времени:</span><span class="v">00:07:15</span></div><div class="row" style="top:162px"><span class="l">Примерно еще загрузить:</span><span class="v">8,9 Мб</span></div><div class="pbar"><div class="pm" style="width:200px"></div><div class="pd" style="width:20px"></div></div><div class="chk"></div><div class="chkl">Закрыть окно после завершения</div><svg class="ic1" width="20" height="20" viewBox="0 0 20 20"><use href="#selrect"/></svg><svg class="ic2" width="18" height="18" viewBox="0 0 18 18"><use href="#magn"/></svg><svg class="ic3" width="20" height="20" viewBox="0 0 20 20"><use href="#ico_w"/></svg><svg class="ic4" width="16" height="16" viewBox="0 0 16 16"><use href="#floppy"/></svg><div class="dd"></div><div class="btn b1">Пауза</div><div class="btn b2">Выход</div><div class="sbar"><span class="s1">z18</span><span class="s2">X:77034; Y:38354</span><span class="s3">0,3 кБ</span><i class="d1"></i><i class="d2"></i><i class="d3"></i><div class="grip"></div></div></div></div>
<div class="win" style="left:148px;top:131px;width:340px;z-index:3"><div class="wglow"></div><svg class="ticon" width="16" height="16" viewBox="0 0 16 16"><use href="#sasicon"/></svg><div class="ttext" style="width:208px">8% Скачивание z1-18 Народная К...</div><div class="caps"><div class="cb cmin"><i></i></div><div class="cb cmax"><i></i></div><div class="cb ccls"><svg width="13" height="10" viewBox="0 0 14 11"><path d="M1.5 0.8 L5 0.8 L7 3.3 L9 0.8 L12.500 0.8 L8.900 5.4 L12.700 10.2 L9.200 10.2 L7 7.500 L4.800 10.2 L1.3 10.2 L5.100 5.4 Z" fill="#f4f6fa" stroke="#3f4958" stroke-width="1.200"/></svg></div></div><div class="client"><div class="memo"><div class="mtext">Обработка файла: [z17/x38460/y19241]<br>C:\Users\User\Desktop\Карты к гонкам\SAS - для конвертации в Раллик<br>Скачивание...</div><div class="vsb"><b class="au"></b><div class="vth"></div><b class="ad"></b></div><div class="hsb"><b class="al"></b><div class="hth"><span></span></div><b class="ar"></b></div><div class="sbc"></div></div><div class="row" style="top:94px"><span class="l">Обработать не более:</span><span class="v">70192 файлов</span></div><div class="row" style="top:111px"><span class="l">Всего обработано:</span><span class="v">5382 файлов</span></div><div class="row" style="top:128px"><span class="l">Всего загружено:</span><span class="v">0 (0,0 кБ) файлов</span></div><div class="row" style="top:145px"><span class="l">Осталось времени:</span><span class="v">02:53:35</span></div><div class="row" style="top:162px"><span class="l">Примерно еще загрузить:</span><span class="v">~ Kb</span></div><div class="pbar"><div class="pm" style="width:24px"></div><div class="pd" style="width:3px"></div></div><div class="chk"></div><div class="chkl">Закрыть окно после завершения</div><svg class="ic1" width="20" height="20" viewBox="0 0 20 20"><use href="#selrect"/></svg><svg class="ic2" width="18" height="18" viewBox="0 0 18 18"><use href="#magn"/></svg><svg class="ic3" width="20" height="20" viewBox="0 0 20 20"><use href="#ico_w"/></svg><svg class="ic4" width="16" height="16" viewBox="0 0 16 16"><use href="#floppy"/></svg><div class="dd"></div><div class="btn b1">Пауза</div><div class="btn b2">Выход</div><div class="sbar"><span class="s1">z17</span><span class="s2">X:38460; Y:19240</span><span class="s3"></span><i class="d1"></i><i class="d2"></i><i class="d3"></i><div class="grip"></div></div></div></div>
<div class="win" style="left:53px;top:336px;width:410px;z-index:4"><div class="wglow"></div><svg class="ticon" width="16" height="16" viewBox="0 0 16 16"><use href="#sasicon"/></svg><div class="ttext">18% Скачивание z1-18 Карта GPS-треков OSM</div><div class="caps"><div class="cb cmin"><i></i></div><div class="cb cmax"><i></i></div><div class="cb ccls"><svg width="13" height="10" viewBox="0 0 14 11"><path d="M1.5 0.8 L5 0.8 L7 3.3 L9 0.8 L12.500 0.8 L8.900 5.4 L12.700 10.2 L9.200 10.2 L7 7.500 L4.800 10.2 L1.3 10.2 L5.100 5.4 Z" fill="#f4f6fa" stroke="#3f4958" stroke-width="1.200"/></svg></div></div><div class="client"><div class="memo"><div class="mtext">Обработка файла: [z17/x38523/y19183]<br>C:\Users\User\Desktop\Карты к гонкам\SAS - для конвертации в Раллик<br>Скачивание...</div><div class="vsb"><b class="au"></b><div class="vth"></div><b class="ad"></b></div><div class="hsb"><b class="al"></b><div class="hth" style="width:148px"><span style="left:70px"></span></div><b class="ar"></b></div><div class="sbc"></div></div><div class="row" style="top:94px"><span class="l">Обработать не более:</span><span class="v">70309 файлов</span></div><div class="row" style="top:111px"><span class="l">Всего обработано:</span><span class="v">12507 файлов</span></div><div class="row" style="top:128px"><span class="l">Всего загружено:</span><span class="v">1004 (276,4 кБ) файлов</span></div><div class="row" style="top:145px"><span class="l">Осталось времени:</span><span class="v">01:05:50</span></div><div class="row" style="top:162px"><span class="l">Примерно еще загрузить:</span><span class="v">15,5 Мб</span></div><div class="pbar"><div class="pm" style="width:69px"></div><div class="pd" style="width:69px"></div></div><div class="chk"></div><div class="chkl">Закрыть окно после завершения</div><svg class="ic1" width="20" height="20" viewBox="0 0 20 20"><use href="#selrect"/></svg><svg class="ic2" width="18" height="18" viewBox="0 0 18 18"><use href="#magn"/></svg><svg class="ic3" width="20" height="20" viewBox="0 0 20 20"><use href="#ico_globe"/></svg><svg class="ic4" width="16" height="16" viewBox="0 0 16 16"><use href="#floppy"/></svg><div class="dd"></div><div class="btn b1">Пауза</div><div class="btn b2">Выход</div><div class="sbar"><span class="s1">z17</span><span class="s2">X:38523; Y:19182</span><span class="s3">0,1 кБ</span><i class="d1"></i><i class="d2"></i><i class="d3"></i><div class="grip"></div></div></div></div>
<div class="win" style="left:490px;top:399px;width:340px;z-index:5"><div class="wglow"></div><svg class="ticon" width="16" height="16" viewBox="0 0 16 16"><use href="#sasicon"/></svg><div class="ttext" style="width:198px">76% Скачивание z1-18 Гибрид (Wi...</div><div class="caps"><div class="cb cmin"><i></i></div><div class="cb cmax"><i></i></div><div class="cb ccls"><svg width="13" height="10" viewBox="0 0 14 11"><path d="M1.5 0.8 L5 0.8 L7 3.3 L9 0.8 L12.500 0.8 L8.900 5.4 L12.700 10.2 L9.200 10.2 L7 7.500 L4.800 10.2 L1.3 10.2 L5.100 5.4 Z" fill="#f4f6fa" stroke="#3f4958" stroke-width="1.200"/></svg></div></div><div class="client"><div class="memo"><div class="mtext">Обработка файла: [z18/x77065/y38333]<br>C:\Users\User\Desktop\Карты к гонкам\SAS - для конвертации в Раллик<br>Скачивание...</div><div class="vsb"><b class="au"></b><div class="vth"></div><b class="ad"></b></div><div class="hsb"><b class="al"></b><div class="hth"><span></span></div><b class="ar"></b></div><div class="sbc"></div></div><div class="row" style="top:94px"><span class="l">Обработать не более:</span><span class="v">70309 файлов</span></div><div class="row" style="top:111px"><span class="l">Всего обработано:</span><span class="v">53694 файлов</span></div><div class="row" style="top:128px"><span class="l">Всего загружено:</span><span class="v">5574 (2,7 Мб) файлов</span></div><div class="row" style="top:145px"><span class="l">Осталось времени:</span><span class="v">00:04:21</span></div><div class="row" style="top:162px"><span class="l">Примерно еще загрузить:</span><span class="v">8,2 Мб</span></div><div class="pbar"><div class="pm" style="width:237px"></div><div class="pd" style="width:24px"></div></div><div class="chk"></div><div class="chkl">Закрыть окно после завершения</div><svg class="ic1" width="20" height="20" viewBox="0 0 20 20"><use href="#selrect"/></svg><svg class="ic2" width="18" height="18" viewBox="0 0 18 18"><use href="#magn"/></svg><svg class="ic3" width="20" height="20" viewBox="0 0 20 20"><use href="#ico_w"/></svg><svg class="ic4" width="16" height="16" viewBox="0 0 16 16"><use href="#floppy"/></svg><div class="dd"></div><div class="btn b1">Пауза</div><div class="btn b2">Выход</div><div class="sbar"><span class="s1">z18</span><span class="s2">X:77065; Y:38332</span><span class="s3">0,4 кБ</span><i class="d1"></i><i class="d2"></i><i class="d3"></i><div class="grip"></div></div></div></div>
<div class="win" style="left:918px;top:307px;width:340px;z-index:6"><div class="wglow"></div><svg class="ticon" width="16" height="16" viewBox="0 0 16 16"><use href="#sasicon"/></svg><div class="ttext" style="width:216px">2% Скачивание z1-18 RusOutdoor ...</div><div class="caps"><div class="cb cmin"><i></i></div><div class="cb cmax"><i></i></div><div class="cb ccls"><svg width="13" height="10" viewBox="0 0 14 11"><path d="M1.5 0.8 L5 0.8 L7 3.3 L9 0.8 L12.500 0.8 L8.900 5.4 L12.700 10.2 L9.200 10.2 L7 7.500 L4.800 10.2 L1.3 10.2 L5.100 5.4 Z" fill="#f4f6fa" stroke="#3f4958" stroke-width="1.200"/></svg></div></div><div class="client"><div class="memo"><div class="mtext">Обработка файла: [z16/x19231/y9607]<br>C:\Users\User\Desktop\Карты к гонкам\SAS - для конвертации в Раллик<br>Скачивание...</div><div class="vsb"><b class="au"></b><div class="vth"></div><b class="ad"></b></div><div class="hsb"><b class="al"></b><div class="hth"><span></span></div><b class="ar"></b></div><div class="sbc"></div></div><div class="row" style="top:94px"><span class="l">Обработать не более:</span><span class="v">70309 файлов</span></div><div class="row" style="top:111px"><span class="l">Всего обработано:</span><span class="v">1504 файлов</span></div><div class="row" style="top:128px"><span class="l">Всего загружено:</span><span class="v">0 (0,0 кБ) файлов</span></div><div class="row" style="top:145px"><span class="l">Осталось времени:</span><span class="v">12:35:22</span></div><div class="row" style="top:162px"><span class="l">Примерно еще загрузить:</span><span class="v">~ Kb</span></div><div class="pbar"><div class="pm" style="width:6px"></div><div class="pd" style="width:6px"></div></div><div class="chk"></div><div class="chkl">Закрыть окно после завершения</div><svg class="ic1" width="20" height="20" viewBox="0 0 20 20"><use href="#selrect"/></svg><svg class="ic2" width="18" height="18" viewBox="0 0 18 18"><use href="#magn"/></svg><svg class="ic3" width="20" height="20" viewBox="0 0 20 20"><use href="#ico_comp"/></svg><svg class="ic4" width="16" height="16" viewBox="0 0 16 16"><use href="#floppy"/></svg><div class="dd"></div><div class="btn b1">Пауза</div><div class="btn b2">Выход</div><div class="sbar"><span class="s1">z16</span><span class="s2">X:19231; Y:9606</span><span class="s3"></span><i class="d1"></i><i class="d2"></i><i class="d3"></i><div class="grip"></div></div></div></div>

</body></html>
